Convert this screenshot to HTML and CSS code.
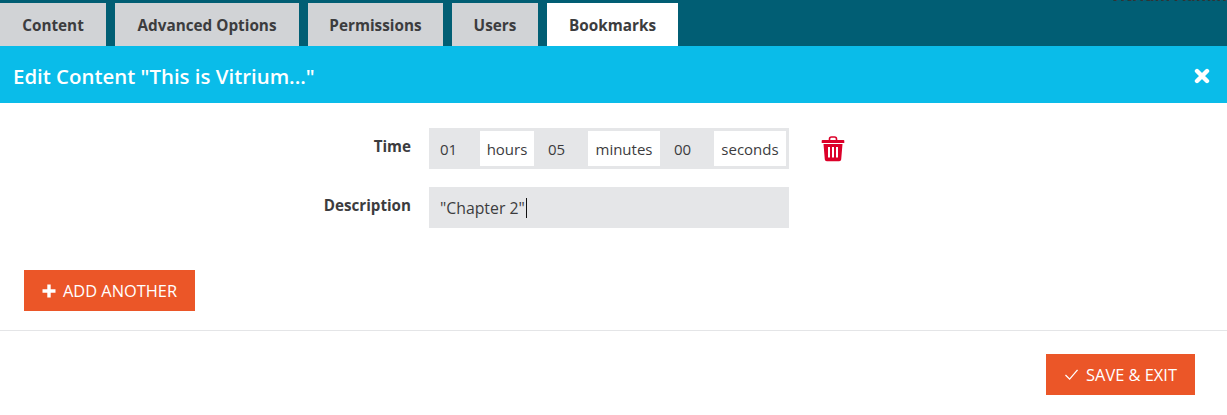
FILE: index.html
```html
<!DOCTYPE html>
<html lang="en">

<head>
    <meta charset="UTF-8">
    <meta name="viewport" content="width=device-width, initial-scale=1.0">
    <title>Edit Content</title>
    <link rel="stylesheet" href="styles.css">
</head>

<body>
    <div class="tab-bar">
        <a class="tab tab-content">Content</a>
        <a class="tab tab-advanced">Advanced Options</a>
        <a class="tab tab-permissions">Permissions</a>
        <a class="tab tab-users">Users</a>
        <a class="tab tab-bookmarks active">Bookmarks</a>
        <span class="user-name">Vitrium Admin</span>
    </div>

    <div class="title-bar">
        <h2>Edit Content "This is Vitrium..."</h2>
        <svg class="close-icon" viewBox="0 0 16 16" width="16" height="16">
            <path d="M3 3L13 13M13 3L3 13" stroke="#fff" stroke-width="4.4" stroke-linecap="round" fill="none" />
        </svg>
    </div>

    <form class="bookmark-form">
        <div class="form-row time-row">
            <label>Time</label>
            <div class="time-group">
                <span class="time-value first">01</span>
                <span class="time-unit unit-hours">hours</span>
                <span class="time-value">05</span>
                <span class="time-unit unit-minutes">minutes</span>
                <span class="time-value">00</span>
                <span class="time-unit unit-seconds">seconds</span>
            </div>
            <svg class="trash-icon" viewBox="0 0 24 26" width="24" height="26">
                <path d="M8.500 4V3a2 2 0 0 1 2-2h3a2 2 0 0 1 2 2v1" stroke="#dc0029" stroke-width="1.600" fill="none" />
                <path d="M1.500 4h21a.8.8 0 0 1 .8.8V7H.7V4.800a.8.8 0 0 1 .8-.8z" fill="#dc0029" />
                <path fill-rule="evenodd" fill="#dc0029" d="M2.500 8h19l-1.300 15.500a2 2 0 0 1-2 1.800H5.800a2 2 0 0 1-2-1.800zM7 11v10.500h2V11zM11 11v10.500h2V11zM15 11v10.500h2V11z" />
            </svg>
        </div>

        <div class="form-row description-row">
            <label>Description</label>
            <div class="description-input">"Chapter 2"<span class="caret"></span></div>
        </div>

        <button type="button" class="action-button add-button">
            <svg viewBox="0 0 14 14" width="14" height="14">
                <path d="M7 0.500V13.500M0.500 7H13.500" stroke="#fff" stroke-width="3.400" fill="none" />
            </svg>
            ADD ANOTHER
        </button>
    </form>

    <div class="footer">
        <button type="button" class="action-button save-button">
            <svg viewBox="0 0 16 14" width="15" height="13">
                <path d="M1.500 7.500L6 12L14.500 2" stroke="#fff" stroke-width="1.400" fill="none" />
            </svg>
            SAVE &amp; EXIT
        </button>
    </div>
</body>

</html>
```

FILE: styles.css
```css
* {
    box-sizing: border-box;
}

html,
body {
    margin: 0;
    height: 415px;
    overflow: hidden;
}

body {
    font-family: "Open Sans", "Noto Sans", sans-serif;
    color: #3c3c3e;
    background-color: #fff;
}

.tab-bar {
    display: flex;
    gap: 9px;
    height: 46px;
    padding-top: 3px;
    overflow: hidden;
    background-color: #015e74;
}

.tab {
    display: flex;
    align-items: center;
    justify-content: center;
    padding-top: 1px;
    background-color: #d1d3d6;
    font-size: 15.3px;
    font-weight: 700;
}

.tab-content {
    width: 106px;
}

.tab-advanced {
    width: 184px;
}

.tab-permissions {
    width: 135px;
}

.tab-users {
    width: 86px;
}

.tab-bookmarks {
    width: 131px;
}

.tab.active {
    background-color: #fff;
}

/* only the bottom of this text shows above the window */
.user-name {
    align-self: flex-start;
    margin: -18px 0 0 auto;
    line-height: 20px;
    font-size: 16px;
    font-weight: 700;
    color: #333;
}

.title-bar {
    display: flex;
    align-items: center;
    justify-content: space-between;
    height: 57px;
    padding: 2px 17px 0 13px;
    background-color: #0abce9;
    color: #fff;
}

.title-bar h2 {
    margin: 0;
    font-size: 20.4px;
    font-weight: 600;
}

.bookmark-form {
    height: 228px;
    padding: 25px 24px 0;
    border-bottom: 1px solid #e4e5e7;
}

.form-row {
    display: flex;
    align-items: center;
}

.form-row label {
    width: 405px;
    padding: 0 18px 5px 0;
    text-align: right;
    font-size: 15.2px;
    font-weight: 700;
}

.time-row {
    height: 41px;
}

.time-group {
    display: flex;
    width: 360px;
    height: 41px;
    padding: 3px;
    background-color: #e5e6e8;
    font-size: 15px;
}

.time-value {
    display: flex;
    align-items: center;
    width: 54px;
    padding-left: 14px;
}

.time-value.first {
    width: 48px;
    padding-left: 8px;
}

.time-unit {
    display: flex;
    align-items: center;
    justify-content: center;
    background-color: #fff;
}

.unit-hours {
    width: 54px;
}

.unit-minutes {
    width: 72px;
}

.unit-seconds {
    width: 72px;
}

.trash-icon {
    margin-left: 32px;
}

.description-row {
    height: 41px;
    margin-top: 18px;
}

.description-input {
    display: flex;
    align-items: center;
    width: 360px;
    height: 41px;
    padding-left: 11px;
    background-color: #e5e6e8;
    font-size: 15.8px;
}

.caret {
    width: 1px;
    height: 20px;
    margin-left: 1px;
    background-color: #111;
}

.action-button {
    display: flex;
    align-items: center;
    justify-content: center;
    height: 41px;
    padding: 0;
    border: none;
    background-color: #eb5628;
    color: #fff;
    font-family: inherit;
    font-size: 16.4px;
}

.add-button {
    gap: 7px;
    width: 171px;
    margin-top: 42px;
}

.footer {
    display: flex;
    justify-content: flex-end;
    padding: 23px 32px 0 0;
}

.save-button {
    gap: 7px;
    width: 149px;
}
```
